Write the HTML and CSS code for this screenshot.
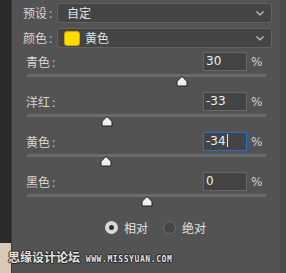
FILE: index.html
```html
<!DOCTYPE html>
<html lang="zh-CN">
<head>
  <meta charset="UTF-8" />
  <title>可选颜色</title>
  <link rel="stylesheet" href="styles.css">
</head>
<body>
  <div class="app">
    <div class="side">
      <div class="side-photo"></div>
    </div>

    <div class="panel">
      <div class="field">
        <span class="label">预设<span class="colon">:</span></span>
        <div class="select">
          <span class="select-text">自定</span>
          <svg class="chevron" width="8" height="5" viewBox="0 0 8 5"><path d="M0.5 0.5 L4 4 L7.5 0.5" fill="none" stroke="#c8c8c8" stroke-width="1.2"/></svg>
        </div>
      </div>

      <div class="field">
        <span class="label">颜色<span class="colon">:</span></span>
        <div class="select">
          <span class="swatch"></span>
          <span class="select-text">黄色</span>
          <svg class="chevron" width="8" height="5" viewBox="0 0 8 5"><path d="M0.5 0.5 L4 4 L7.5 0.5" fill="none" stroke="#c8c8c8" stroke-width="1.2"/></svg>
        </div>
      </div>

      <div class="sliders" id="sliders"></div>

      <div class="radios">
        <span class="radio checked"></span><span class="radio-text">相对</span>
        <span class="radio"></span><span class="radio-text">绝对</span>
      </div>
    </div>

    <div class="edge"></div>

    <div class="watermark">思缘设计论坛 <span class="wm-url">WWW.MISSYUAN.COM</span></div>
  </div>

  <script>
    const sliders = [
      { name: "青色", value: 30 },
      { name: "洋红", value: -33 },
      { name: "黄色", value: -34, focus: true },
      { name: "黑色", value: 0 }
    ];

    const box = document.getElementById("sliders");

    sliders.forEach(s => {
      const div = document.createElement("div");
      div.className = "slider";
      // track is 239px wide, value runs -100..100
      const pos = Math.round((s.value + 100) / 200 * 239);
      div.innerHTML = `
        <div class="slider-head">
          <span class="label">${s.name}<span class="colon">:</span></span>
          <div class="num${s.focus ? " focus" : ""}">${s.value}${s.focus ? '<span class="caret"></span>' : ""}</div>
          <span class="pct">%</span>
        </div>
        <div class="track">
          <svg class="thumb" style="left: ${pos}px" width="12" height="11" viewBox="0 0 12 11">
            <path d="M1 10 L1 6.5 Q1 5.5 2 4.5 L5 1.2 Q6 0.3 7 1.2 L10 4.5 Q11 5.5 11 6.5 L11 10 Z" fill="#efefef" stroke="#1e1e1e" stroke-width="1"/>
          </svg>
        </div>`;
      box.appendChild(div);
    });
  </script>
</body>
</html>
```

FILE: styles.css
```css
body {
  margin: 0;
  padding: 0;
  background-color: #535353;
  font-family: "Noto Sans CJK SC", "Liberation Sans", sans-serif;
  font-size: 12px;
  color: #d6d6d6;
}

.app {
  position: relative;
  display: flex;
  width: 286px;
  height: 273px;
  overflow: hidden;
}

.side {
  width: 11px;
  background-color: #2a2a2a;
  border-right: 1px solid #3a3a3a;
  display: flex;
  flex-direction: column;
  justify-content: flex-end;
}

.side-photo {
  height: 30px;
  background-color: #d9c8b6;
}

.panel {
  flex: 1;
  padding: 3px 6px 0 11px;
}

.edge {
  width: 7px;
  background-color: #4d4d4d;
  border-left: 1px solid #575757;
}

.field {
  display: flex;
  align-items: center;
  height: 20px;
  margin-bottom: 5px;
}

.label {
  width: 34px;
  line-height: 14px;
  white-space: nowrap;
}

.colon {
  color: #8fbbe3;
  margin-left: 2px;
}

.select {
  flex: 1;
  height: 18px;
  display: flex;
  align-items: center;
  background-color: #454545;
  border: 1px solid #616161;
  border-radius: 3px;
  padding: 0 7px 0 9px;
}

.select-text {
  flex: 1;
  color: #e2e2e2;
  line-height: 14px;
}

.swatch {
  width: 14px;
  height: 13px;
  margin: 0 5px 0 -3px;
  background-color: #ffdd00;
  border: 1px solid #c9a800;
  border-radius: 3px;
}

.chevron {
  display: block;
}

.sliders {
  padding: 0 0 1px 3px;
  margin-top: -1px;
}

.slider {
  margin-bottom: 15px;
}

.slider:last-child {
  margin-bottom: 0;
}

.slider-head {
  display: flex;
  align-items: center;
  height: 19px;
}

.slider-head .label {
  flex: 1;
}

.num {
  box-sizing: border-box;
  width: 44px;
  height: 19px;
  padding-left: 2px;
  background-color: #444444;
  border: 1px solid #676767;
  color: #e6eef6;
  font-family: "DejaVu Sans", sans-serif;
  font-size: 12px;
  line-height: 17px;
}

.num.focus {
  border-color: #1f6fd6;
}

.caret {
  display: inline-block;
  width: 1px;
  height: 13px;
  margin-left: 1px;
  vertical-align: -2px;
  background-color: #e6e6e6;
}

.pct {
  width: 13px;
  margin: 0 8px 0 4px;
  font-family: "DejaVu Sans", sans-serif;
  font-size: 12px;
  color: #d0d0d0;
}

.track {
  position: relative;
  width: 239px;
  height: 3px;
  margin: 3px 0 0 1px;
  background-color: #6b6b6b;
}

.thumb {
  position: absolute;
  top: 2px;
  margin-left: -6px;
  display: block;
}

.radios {
  display: flex;
  align-items: center;
  height: 13px;
  margin-top: 23px;
  padding-left: 82px;
}

.radio {
  box-sizing: border-box;
  width: 13px;
  height: 13px;
  border-radius: 50%;
  background-color: #464646;
  border: 1px solid #6e6e6e;
}

.radio.checked {
  background-color: #2e2e2e;
  border: 4px solid #d8d8d8;
}

.radio-text {
  margin: 0 15px 0 6px;
  line-height: 14px;
  color: #e0e0e0;
}

.watermark {
  position: absolute;
  left: 8px;
  top: 248px;
  font-size: 12px;
  font-weight: bold;
  color: #e4e4e4;
  white-space: nowrap;
  text-shadow: 1px 0 0 #222, -1px 0 0 #222, 0 1px 0 #222, 0 -1px 0 #222;
}

.wm-url {
  margin-left: 3px;
  font-family: "DejaVu Sans Mono", monospace;
  font-size: 8px;
  letter-spacing: 0.6px;
}
```
